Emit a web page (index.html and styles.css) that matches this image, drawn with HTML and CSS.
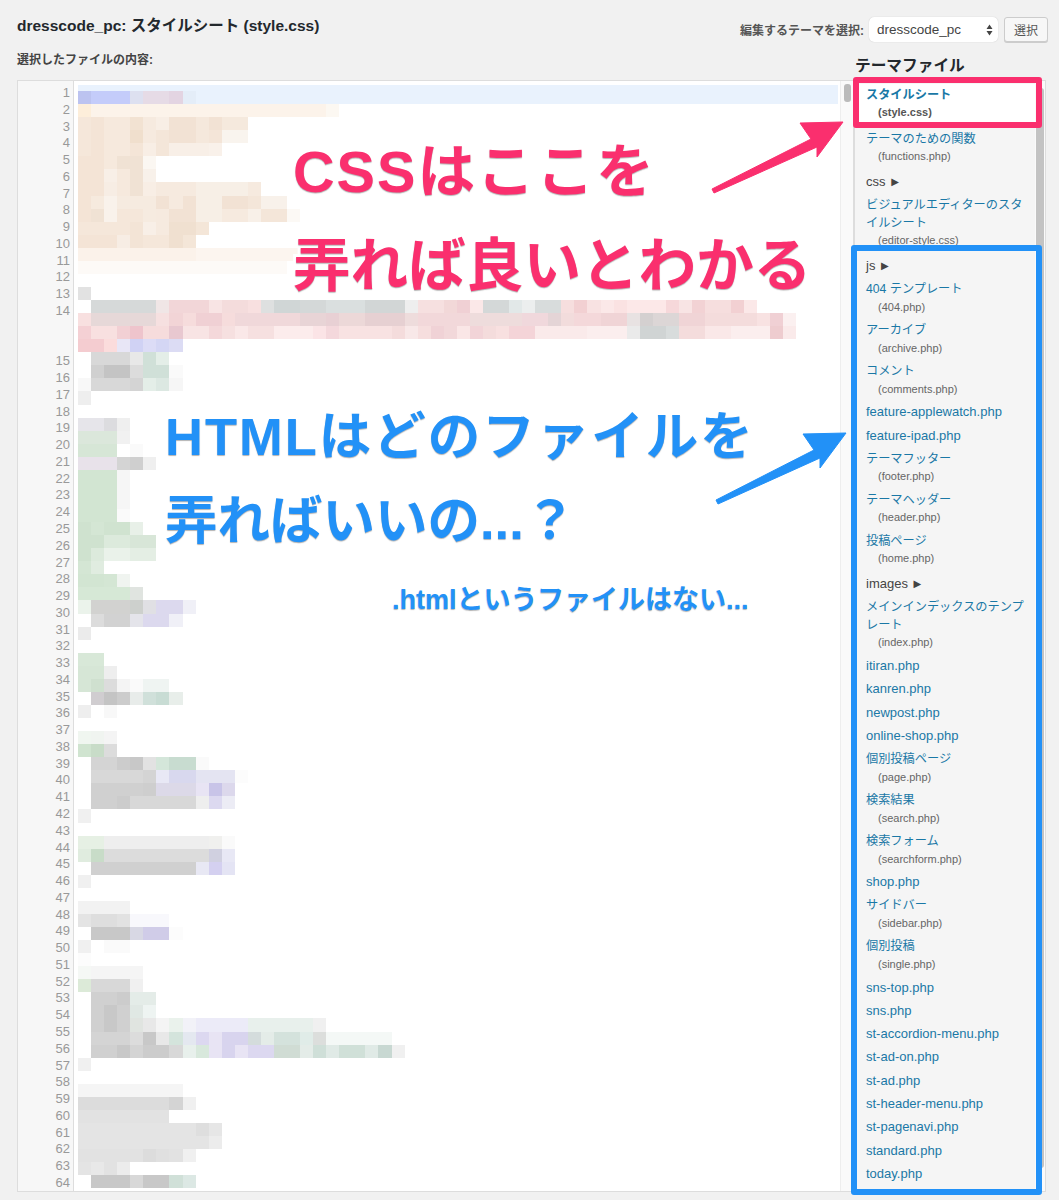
FILE: index.html
```html
<!DOCTYPE html>
<html lang="ja">
<head>
  <meta charset="UTF-8">
  <title>dresscode_pc: スタイルシート (style.css)</title>
  <link rel="stylesheet" href="styles.css">
</head>
<body>
  <div class="page">
    <div class="top-bar">
      <h1 class="file-title">dresscode_pc: スタイルシート (style.css)</h1>
      <div class="theme-picker">
        <span class="theme-label">編集するテーマを選択:</span>
        <div class="theme-select">
          <span>dresscode_pc</span>
          <svg class="select-arrows" width="7" height="12" viewBox="0 0 7 12">
            <path d="M3.5 0.5 L6.5 5 L0.5 5 Z M3.5 11.5 L6.5 7 L0.5 7 Z" fill="#444"/>
          </svg>
        </div>
        <button class="theme-button">選択</button>
      </div>
    </div>

    <div class="sub-bar">
      <div class="content-label">選択したファイルの内容:</div>
      <h2 class="side-title">テーマファイル</h2>
    </div>

    <div class="workspace">
      <div class="editor">
        <div class="gutter" id="gutter"></div>
        <div class="code" id="code"></div>
        <div class="editor-scroll"><div class="editor-thumb"></div></div>
      </div>

      <div class="side">
        <ul class="file-list">
          <li class="current"><a class="ja">スタイルシート</a><small>(style.css)</small></li>
          <li><a class="ja">テーマのための関数</a><small>(functions.php)</small></li>
          <li class="dir">css <i>▶</i></li>
          <li><a class="ja">ビジュアルエディターのスタイルシート</a><small>(editor-style.css)</small></li>
          <li class="dir">js <i>▶</i></li>
          <li><a class="ja">404 テンプレート</a><small>(404.php)</small></li>
          <li><a class="ja">アーカイブ</a><small>(archive.php)</small></li>
          <li><a class="ja">コメント</a><small>(comments.php)</small></li>
          <li><a>feature-applewatch.php</a></li>
          <li><a>feature-ipad.php</a></li>
          <li><a class="ja">テーマフッター</a><small>(footer.php)</small></li>
          <li><a class="ja">テーマヘッダー</a><small>(header.php)</small></li>
          <li><a class="ja">投稿ページ</a><small>(home.php)</small></li>
          <li class="dir">images <i>▶</i></li>
          <li><a class="ja">メインインデックスのテンプレート</a><small>(index.php)</small></li>
          <li><a>itiran.php</a></li>
          <li><a>kanren.php</a></li>
          <li><a>newpost.php</a></li>
          <li><a>online-shop.php</a></li>
          <li><a class="ja">個別投稿ページ</a><small>(page.php)</small></li>
          <li><a class="ja">検索結果</a><small>(search.php)</small></li>
          <li><a class="ja">検索フォーム</a><small>(searchform.php)</small></li>
          <li><a>shop.php</a></li>
          <li><a class="ja">サイドバー</a><small>(sidebar.php)</small></li>
          <li><a class="ja">個別投稿</a><small>(single.php)</small></li>
          <li><a>sns-top.php</a></li>
          <li><a>sns.php</a></li>
          <li><a>st-accordion-menu.php</a></li>
          <li><a>st-ad-on.php</a></li>
          <li><a>st-ad.php</a></li>
          <li><a>st-header-menu.php</a></li>
          <li><a>st-pagenavi.php</a></li>
          <li><a>standard.php</a></li>
          <li><a>today.php</a></li>
        </ul>
        <div class="side-scroll"><div class="side-thumb"></div></div>
      </div>
    </div>

    <!-- annotations drawn on top of the screen -->
    <div class="note note-css note-big css-line-1">CSSはここを</div>
    <div class="note note-css note-big css-line-2">弄れば良いとわかる</div>
    <div class="note note-html note-mid html-line-1">HTMLはどのファイルを</div>
    <div class="note note-html note-mid html-line-2">弄ればいいの...？</div>
    <div class="note note-html note-small html-line-3">.htmlというファイルはない...</div>

    <div class="mark mark-css"></div>
    <div class="mark mark-html"></div>

    <svg class="arrows" width="1059" height="1200" viewBox="0 0 1059 1200">
      <path class="arrow-css" d="M712 189 L811 139 L800 123 L843 122 L817 157 L817 147 L714 193 Z"/>
      <path class="arrow-html" d="M716 500 L814 450 L803 434 L846 433 L820 468 L820 458 L718 504 Z"/>
    </svg>
  </div>
  <script src="mosaic.js"></script>
</body>
</html>
```
FILE: styles.css
```css
* {
  margin: 0;
  padding: 0;
  box-sizing: border-box;
}

body {
  font-family: "Liberation Sans", "Noto Sans CJK JP", sans-serif;
  background: #f1f1f1;
  color: #444;
  font-size: 13px;
}

.page {
  position: relative;
  width: 1059px;
  height: 1200px;
  overflow: hidden;
  padding: 17px 11px 0 17px;
}

/* top row */
.top-bar {
  display: flex;
  justify-content: space-between;
  align-items: flex-start;
  height: 25px;
}

.file-title {
  margin-top: -1px;
  font-size: 15.5px;
  font-weight: 700;
  line-height: 19px;
  color: #23282d;
}

.theme-picker {
  display: flex;
  align-items: center;
  height: 25px;
}

.theme-label {
  font-size: 12px;
  font-weight: 700;
  color: #555;
  margin-right: 5px;
}

.theme-select {
  display: flex;
  justify-content: space-between;
  align-items: center;
  width: 129px;
  height: 25px;
  padding: 0 5px 0 8px;
  background: #fff;
  border-radius: 5px;
  box-shadow: 0 0 1px #bbb;
  font-size: 13.5px;
  color: #444;
}

.theme-button {
  width: 44px;
  height: 25px;
  margin-left: 6px;
  background: #f7f7f7;
  border: 1px solid #ccc;
  border-radius: 3px;
  box-shadow: 0 1px 0 #ccc;
  font-family: inherit;
  font-size: 12px;
  color: #555;
}

.sub-bar {
  display: flex;
  justify-content: space-between;
  align-items: flex-start;
  height: 38px;
  padding: 10px 0 0;
}

.content-label {
  font-size: 12px;
  font-weight: 700;
  line-height: 16px;
  color: #444;
}

.side-title {
  width: 193px;
  margin-top: 4px;
  font-size: 15.7px;
  font-weight: 700;
  line-height: 20px;
  color: #23282d;
}

/* editor + file list */
.workspace {
  display: flex;
  align-items: flex-start;
}

.editor {
  display: flex;
  width: 837px;
  height: 1112px;
  background: #fff;
  border: 1px solid #ddd;
}

.gutter {
  width: 56px;
  flex-shrink: 0;
  padding: 4px 3px 0 0;
  background: #f7f7f7;
  border-right: 1px solid #ddd;
  text-align: right;
  font-size: 13px;
  line-height: 16.77px;
  color: #999;
}

.gutter .tall {
  height: 50.4px;
}

.code {
  flex: 1;
  padding: 4px 2px 0 4px;
  overflow: hidden;
  filter: blur(0.5px);
}

.code-top {
  height: 6px;
  background: #e9f2fd;
}

.code-row {
  display: flex;
  height: 13.07px;
}

.code-row.active {
  background: #e9f2fd;
}

.code-cell {
  width: 13.07px;
  flex-shrink: 0;
}

.editor-scroll {
  width: 13px;
  flex-shrink: 0;
  padding: 3px 2px 0 3px;
  background: #fafafa;
  border-left: 1px solid #eee;
}

.editor-thumb {
  height: 18px;
  background: #bbb;
  border-radius: 3px;
}

.side {
  display: flex;
  width: 192px;
  height: 1112px;
  background: #fafafa;
  border: 1px solid #ddd;
  border-left: 0;
}

.file-list {
  flex: 1;
  padding-top: 2.5px;
  background: #f5f5f5;
  border-left: 1px solid #ddd;
  list-style: none;
  overflow: hidden;
}

.file-list li {
  padding: 2.5px 10px 2.5px 11px;
  line-height: 18.3px;
}

.file-list li.current {
  padding-bottom: 5.5px;
  background: #fff;
  font-weight: 700;
}

.file-list a {
  display: block;
  color: #1a78a6;
}

.file-list a.ja {
  font-size: 12.2px;
  line-height: 17.5px;
  padding-top: 0.8px;
}

.file-list small {
  display: block;
  padding-left: 12px;
  font-size: 11px;
  line-height: 17.7px;
  color: #666;
}

.file-list .current small {
  color: #555;
}

.file-list li.dir {
  margin-top: 2px;
  padding-bottom: 2.7px;
  color: #444;
}

.file-list .dir i {
  margin-left: 2px;
  font-family: "DejaVu Sans", sans-serif;
  font-size: 10px;
  font-style: normal;
  vertical-align: 1px;
}

.side-scroll {
  width: 10px;
  flex-shrink: 0;
  padding: 7px 1px 0 1px;
}

.side-thumb {
  height: 1080px;
  background: #c3c3c3;
  border-radius: 3px;
}

/* annotations */
.note {
  position: absolute;
  white-space: nowrap;
  font-weight: 700;
  paint-order: stroke fill;
  -webkit-text-stroke-color: #fff;
  text-shadow: 0 1px 1px rgba(0, 0, 0, 0.3);
}

.note-css {
  color: #fa2f6e;
}

.note-html {
  color: #2291f7;
}

.note-big {
  font-size: 57.6px;
  line-height: 70px;
  -webkit-text-stroke-width: 6px;
}

.note-mid {
  font-size: 52.5px;
  line-height: 60px;
  -webkit-text-stroke-width: 5px;
}

.note-small {
  font-size: 27px;
  line-height: 32px;
  -webkit-text-stroke-width: 3px;
}

.css-line-1 {
  left: 293px;
  top: 137px;
  letter-spacing: 2px;
}

.css-line-2 {
  left: 293px;
  top: 231px;
}

.html-line-1 {
  left: 165px;
  top: 407px;
  letter-spacing: 2px;
}

.html-line-2 {
  left: 165px;
  top: 491px;
}

.html-line-3 {
  left: 392px;
  top: 584px;
}

.mark {
  position: absolute;
  border-style: solid;
  border-width: 6px;
  border-radius: 3px;
}

.mark-css {
  left: 853px;
  top: 77px;
  width: 189px;
  height: 51px;
  border-color: #fa2f6e;
}

.mark-html {
  left: 851px;
  top: 245px;
  width: 191px;
  height: 950px;
  border-color: #2291f7;
}

.arrows {
  position: absolute;
  left: 0;
  top: 0;
  pointer-events: none;
}

.arrow-css {
  fill: #fa2f6e;
  stroke: #fa2f6e;
  stroke-width: 1;
  stroke-linejoin: round;
}

.arrow-html {
  fill: #2291f7;
  stroke: #2291f7;
  stroke-width: 1;
  stroke-linejoin: round;
}
```
FILE: mosaic.js
```js
// line numbers in the gutter
const gutter = document.getElementById('gutter');
for (let i = 1; i <= 64; i++) {
  const line = document.createElement('div');
  line.textContent = i;
  if (i === 14) line.className = 'tall';
  gutter.appendChild(line);
}

// blurred code, one string per row: "color" or "color*count", "-" is empty
const rows = [
  'bcc3f0 c4ccfa*3 dde0f0 e6dbe6*2 e3d4e2 e4edf8',
  'fdeeda fcf3ea*18 fcf8f2',
  'f5e7da f4e4d6 f6e9dd*2 f2e2d2 f6eadf f8eee5 f2e2d4*2 f5e8dc f2e2d4 f5e9dd*2',
  'f5e7da f4e4d6 f6e9dd*2 f0dfcd f6eadf f4e6d9 f2e2d4*2 f5e8dc f4e5d8 f9f4ee*2',
  'f5e7da f4e4d6 f6e9dd*2 f4e5d7 f8eee5 f4e6d9 f8efe7*3 f9f1ea',
  'f4e4d6 f4e4d6 f6e9dd f0e2d4*2 fbf7f2',
  'f4e4d6 f4e4d6 f8efe7 f6e9dd f0e2d4 f8f1ea',
  'f4e4d6 f4e4d6 f7ede4 f6e9dd f0e2d4 f8eee5 f6eadf*3 f7efe6*3 f7efe6 f6eadf',
  'f4e4d6 f6eade f9f2eb f6ebe0*2 f6ebe0 f2e2d4 f6eadf f2e2d4 f7efe6*2 f2e2d4*2 f4e6d9 f8f1ea*2',
  'f4e4d6 f0e2d4 f9f2eb f5e7da*2 f6ebe0 f6eadf f2e2d4*2 f7efe6*2 f6eadf*2 f8f0e8 f4e6d9*2 fcf9f5',
  'f5e7da*4 f3e4d6 f8efe7 f6eadf f0e0d0*2 f4e6d8',
  'f4e4d6*3 f7ede4 f3e4d6 f5e7da*2 f0e0d0 f4e6d8',
  'fbf2ea*9 fcf5ef*9',
  'fdfaf7*16',
  '',
  'e2e2e2',
  '- d6d9d9*5 f0e6e6 f2d6d8*3 f8e4e4 f4dcdc*2 f8e0e0 dee0e0 d0d6d6*2 d4d8d8*2 dadfdf*3 d2d6d6*3 eeeeee f6e0e0*2 f2d8d8 f0d0d4 fbe8e8 d4d8d8*2 e2e8e8 eceeee d8dcdc*2 f6dede f2d0d2 f8e2e2 fbe8e8 fae2e2 fce8e8*3 f6d8da f8e4e4 f2d2d4 f6dede*2 f2d0d2 fbe8e8',
  'f8e0e0 e6d8d8*5 f6e0e0 f2d4d6 f6dcdc f0d0d4*2 f6dcdc f0d8da*5 e8d4d6*2 e8d0d4 ecd8d8*2 e6d0d2*3 eedcdc f2d8da*4 eedcdc*4 f0d8dc*2 e4d4d6 f2dcdc f4d8da*2 f0d4d6*2 e8e2e2 d4d0d0 dcd6d6*2 f0d4d6*2 f4dcdc*4 f8e2e2 f0d0d4 fbf0f0',
  'f4d0d4 f8e0e0*2 f2d0d4 eec4cc f6dcdc*2 e8c8d0 f8e4e4*2 f4d8da f6e0e0 fae8e8 f6e0e0*2 fcecec*3 fbe4e6 f4d8dc f8e2e2*4 f4dcdc f8e8e8 f6dede f0d2d6 f2d8da fae6e6 f2d4d8 f4dcdc f8e0e0 f4d4d8*2 faeaea*4 fbeeee*3 eaeaea d0d4d4*2 d8dcdc f4dcdc*2 fae8e8*2 fbeeee*3 eecccf faeaea',
  'f4ccd0*2 fbdcdc e8e6f6 d0d2f4 dcdcf6 d4d6f4 dcdcf4',
  '- d8d8d8*3 e8e8e8 d0e0d8 e4eee8',
  '- d0d0d0 c4c4c4*2 dcdcdc d0e0d8*2 fafafa',
  'f8f8f8 d8d8d8*3 d4d4d4 e4eee8 dce8e2 f6f6f6',
  'eeeeee',
  '',
  'e6e5ea*2 dcdcdf efefef',
  'dbe7db*3 f1f1f1',
  'd6e6d6*3 - fafafa',
  'e8e2ea*3 d4d4d4 cfcfcf efefef',
  'd2e5d2*3 f6f6f6',
  'd2e5d2*3 f6f6f6',
  'd2e5d2*3 f6f6f6',
  'd2e5d2*3 fafafa',
  'cfe2cf d4e6d4 d0e3d0*2 e8f0e8',
  'cfe2cf*2 dceadc*2 d8e6d8*2',
  'cfe2cf dceadc eaf2ea*2 e4eee4*2',
  'd4e6d4 e0ece0',
  'd2e5d2*2 d4e6d4 f0f4f0',
  'd6e8d6*4 e0e4e0',
  'ebf3eb d2d2d0*3 cdd0cd e0e0e4 dcd9ee*2 f0f0f7',
  '- dcdcdc d2d2d2*2 e4e4ea dcd9ee*2 f0f0f7',
  'ebebeb',
  '',
  'd8e8d8*2',
  'd6e6d6*2 eeeeee',
  'd6e6d6 cfe0cf dcdcdc f4f4f4 fafafa eff4f2*2',
  '- d0cdd0 c4c4c4 cccccc e8ecea d0e0da c8dcd4 e8eeea',
  'eeeeee - f8f8f8',
  '',
  'f0f6f0 f0f4f0 f4f4f4',
  'd0e4d0 c8dcc8 dcdcdc',
  '- d4d4d4*2 cccccc c8c8c8 e2e2e2 d4e6da c8dcd0*2 fafafa',
  '- d8d8d8*4 d4d4d4 e8e8f5 d8d8ee*2 e4e4f2*3 fcfcfc',
  '- d0d0d0*4 cecece dcd9e8*3 e8e4f4 c8c4e8 dcd8ec',
  '- d0d0d0*2 cccccc d8d8d8*5 eeeeee dcd9f0 ececf5',
  'f0f0f0',
  '',
  'e6f0e4*2 eeeeee*8 f0f0ee fafafa',
  'e0ecdf c8dcc8 dcdcdc*8 d0d0e0 e8e8f5',
  '- d0d0d0*8 e8e8f4 d4d0f0 e4e4f4',
  'f0f0f0',
  '',
  'f2f2f2*4',
  'e4e4e4 dedede*2 e2e2e2 f8f8fc*3',
  '- c8c8c8*3 d8d8e4 d0cce8*2 fcfcfc',
  'f0f0f0 - fafafa*2',
  'fcfcfc',
  'f5f8f5 f5f5f5*4',
  'dcead8 d8d8d8*3 f0f0f0',
  '- d0d0d0*2 cccccc e4ece8*2',
  '- d0d0d0 c8c8c8 d0d0d0 e0e8e4 eef4f2',
  '- d0d0d0 c8c8c8 d0d0d0 e0e4e0 e8e8e8 f4f4f4 eaf2ec f2f2f8 ecebf8*4 e8f0ec*5 f0f0f0',
  '- d4d4d4*3 dcdcdc c8c8c8 e8e8e8 d4e4dc e4e8f0 dcd8f0 e8e4f4 d8d4ee*2 d4dcdc e4ece8 d4e2dc*2 e0ece8 dcdedc f4f8f6*5',
  '- d0d0d0*2 c8c8c8 d4d4d4 cccccc*2 d8d8d8 e8f0ec d8e8dc e8e4f4 d8d4ee e8e4f4 dcd8f0*2 d0dcd4*2 e4ece8 cfdfd8 e0eae6 d0e0d8*2 e0eae6 c8d8d2 f0f0f0',
  'f0f0f0',
  '',
  'f5f5f5*8',
  'dcdcdc*7 d4d4d4 f0f0f0',
  'e2e2e2*7',
  'e4e4e4*9 dedede e6e6e6',
  'e4e4e4*10 ececec',
  'e2e2e2*5 dcdcdc e0e0e0 e2e2e2 f0f0f0',
  'e4e4e4 e8e8e8 e2e2e2 ececec',
  '- c8c8c8*3 d8d8d8 c8c8c8*2 d0e0d8 dce8e4'
];

const code = document.getElementById('code');
const codeTop = document.createElement('div');
codeTop.className = 'code-top';
code.appendChild(codeTop);

rows.forEach((row, index) => {
  const rowEl = document.createElement('div');
  rowEl.className = index === 0 ? 'code-row active' : 'code-row';
  row.split(' ').filter(Boolean).forEach(token => {
    const [color, count] = token.split('*');
    for (let n = 0; n < (Number(count) || 1); n++) {
      const cell = document.createElement('div');
      cell.className = 'code-cell';
      if (color !== '-') cell.style.background = '#' + color;
      rowEl.appendChild(cell);
    }
  });
  code.appendChild(rowEl);
});
```
